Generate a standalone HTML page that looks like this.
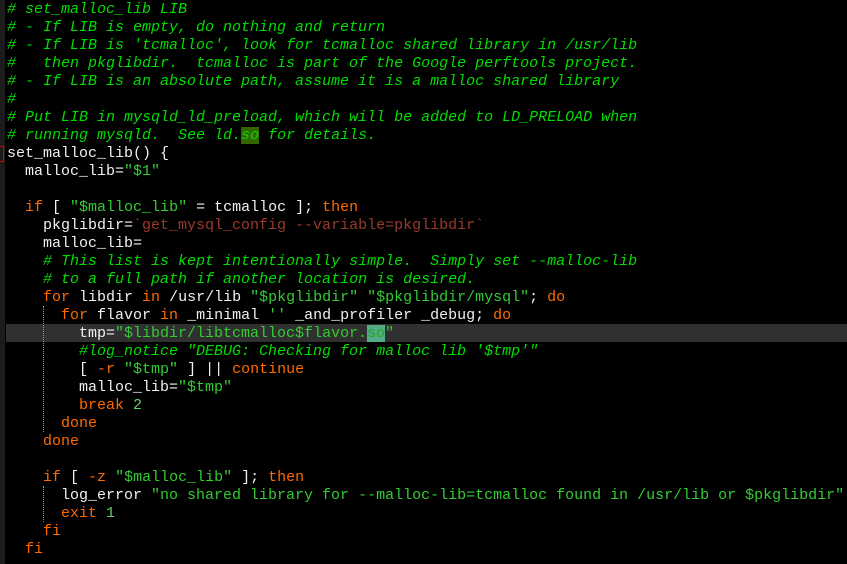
<!DOCTYPE html>
<html><head><meta charset="utf-8"><style>
html,body{margin:0;padding:0;background:#000;width:847px;height:564px;overflow:hidden}
#c{position:absolute;left:7px;top:1px;font-family:"Liberation Mono",monospace;font-size:15px;line-height:18px;color:#f0f0f0;white-space:pre}
.l{height:18px}
.c{color:#00dd00;font-style:italic}
.s{color:#33cc33}
.k{color:#ff6a00}
.b{color:#9a3a2a}
.n{color:#66cc66}
.h{background:#336600}
.h2{background:#55aa88;color:#22aa22}
#cur{position:absolute;left:6px;top:324px;width:841px;height:18px;background:#303030}
#gut{position:absolute;left:0;top:0;width:5px;height:564px;background:#1c1c1c}
.g{position:absolute;width:0;border-left:1px dotted #999}
</style></head><body>
<div id="gut"></div>
<div id="cur"></div>
<div style="position:absolute;left:0;top:146px;width:3px;height:14px;border:1px solid #d00;border-left:none"></div>
<div class="g" style="left:43px;top:306px;height:126px"></div>
<div class="g" style="left:43px;top:486px;height:36px"></div>
<div id="c"><div class="l"><span class="c"># set_malloc_lib LIB</span></div><div class="l"><span class="c"># - If LIB is empty, do nothing and return</span></div><div class="l"><span class="c"># - If LIB is 'tcmalloc', look for tcmalloc shared library in /usr/lib</span></div><div class="l"><span class="c">#   then pkglibdir.  tcmalloc is part of the Google perftools project.</span></div><div class="l"><span class="c"># - If LIB is an absolute path, assume it is a malloc shared library</span></div><div class="l"><span class="c">#</span></div><div class="l"><span class="c"># Put LIB in mysqld_ld_preload, which will be added to LD_PRELOAD when</span></div><div class="l"><span class="c"># running mysqld.  See ld.<span class="h">so</span> for details.</span></div><div class="l">set_malloc_lib() {</div><div class="l">  malloc_lib=<span class="s">"$1"</span></div><div class="l"> </div><div class="l">  <span class="k">if</span> [ <span class="s">"$malloc_lib"</span> = tcmalloc ]; <span class="k">then</span></div><div class="l">    pkglibdir=<span class="b">`get_mysql_config --variable=pkglibdir`</span></div><div class="l">    malloc_lib=</div><div class="l">    <span class="c"># This list is kept intentionally simple.  Simply set --malloc-lib</span></div><div class="l">    <span class="c"># to a full path if another location is desired.</span></div><div class="l">    <span class="k">for</span> libdir <span class="k">in</span> /usr/lib <span class="s">"$pkglibdir"</span> <span class="s">"$pkglibdir/mysql"</span>; <span class="k">do</span></div><div class="l">      <span class="k">for</span> flavor <span class="k">in</span> _minimal <span class="s">''</span> _and_profiler _debug; <span class="k">do</span></div><div class="l">        tmp=<span class="s">"$libdir/libtcmalloc$flavor.<span class="h2">so</span>"</span></div><div class="l">        <span class="c">#log_notice "DEBUG: Checking for malloc lib '$tmp'"</span></div><div class="l">        [ <span class="k">-r</span> <span class="s">"$tmp"</span> ] || <span class="k">continue</span></div><div class="l">        malloc_lib=<span class="s">"$tmp"</span></div><div class="l">        <span class="k">break</span> <span class="n">2</span></div><div class="l">      <span class="k">done</span></div><div class="l">    <span class="k">done</span></div><div class="l"> </div><div class="l">    <span class="k">if</span> [ <span class="k">-z</span> <span class="s">"$malloc_lib"</span> ]; <span class="k">then</span></div><div class="l">      log_error <span class="s">"no shared library for --malloc-lib=tcmalloc found in /usr/lib or $pkglibdir"</span></div><div class="l">      <span class="k">exit</span> <span class="n">1</span></div><div class="l">    <span class="k">fi</span></div><div class="l">  <span class="k">fi</span></div></div>
</body></html>
